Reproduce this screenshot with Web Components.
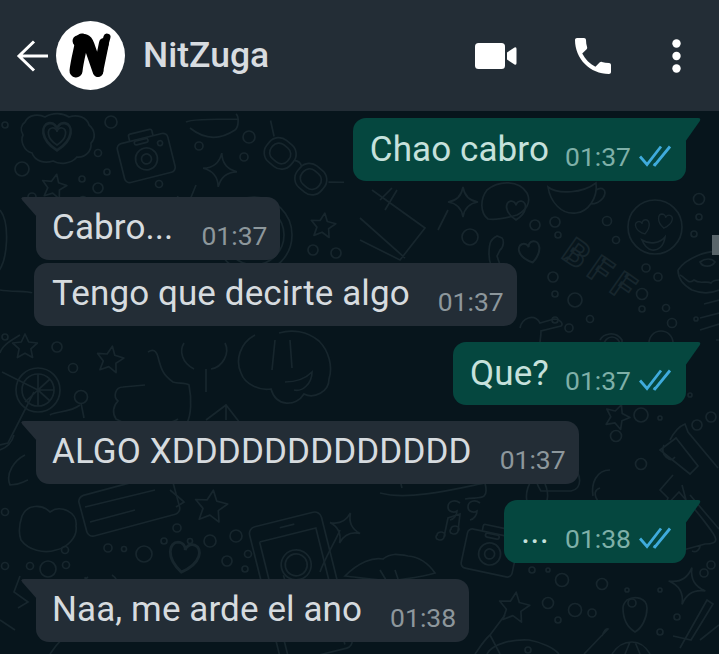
<!DOCTYPE html>
<html lang="es">
<head>
<meta charset="utf-8">
<title>NitZuga</title>
<style>
  html, body { margin: 0; height: 100%; background: #07151c; overflow: hidden; }
  body { font-family: Roboto, "Liberation Sans", sans-serif; }
</style>
</head>
<body>
<chat-screen>
  <chat-header slot="header" name="NitZuga"></chat-header>
  <chat-bubble type="out" time="01:37" tail>Chao cabro</chat-bubble>
  <chat-bubble type="in" time="01:37" tail gap>Cabro...</chat-bubble>
  <chat-bubble type="in" time="01:37">Tengo que decirte algo</chat-bubble>
  <chat-bubble type="out" time="01:37" tail gap>Que?</chat-bubble>
  <chat-bubble type="in" time="01:37" tail gap>ALGO XDDDDDDDDDDDDD</chat-bubble>
  <chat-bubble type="out" time="01:38" tail gap>...</chat-bubble>
  <chat-bubble type="in" time="01:38" tail gap>Naa, me arde el ano</chat-bubble>
</chat-screen>

<script>
class ChatHeader extends HTMLElement {
  constructor() {
    super();
    this.attachShadow({ mode: 'open' });
  }

  connectedCallback() {
    this.shadowRoot.innerHTML = `
      <style>
        :host {
          display: flex;
          align-items: center;
          height: 111px;
          background: #232d36;
          flex: none;
          position: relative;
          z-index: 1;
        }
        svg { display: block; flex: none; }
        .back { margin-left: 15px; }
        .avatar { margin-left: 6px; }
        .name {
          margin-left: 18px;
          font-size: 35.500px;
          font-weight: 500;
          color: #d8dce0;
          padding-bottom: 1px;
        }
        .video { margin-left: auto; }
        .call { margin-left: 52px; }
        .more { margin-left: 55px; margin-right: 38px; }
      </style>
      <svg class="back" width="35" height="34" viewBox="0 0 35 34" fill="none" stroke="#fff" stroke-width="3">
        <path d="M33 17H4M19 2.500 4 17l15 14.500"/>
      </svg>
      <svg class="avatar" width="69" height="69" viewBox="0 0 69 69">
        <circle cx="34.500" cy="34.500" r="34.500" fill="#fff"/>
        <g fill="none" stroke="#000" stroke-linecap="round" stroke-linejoin="round">
          <path stroke-width="13" d="M26 19C24 30 21 40 20 50"/>
          <path stroke-width="11" d="M22 20c6-3 9-2 11 4l9 26"/>
          <path stroke-width="10" d="M48 22 42 51"/>
          <path stroke-width="7" d="M51 16 46 34"/>
        </g>
      </svg>
      <span class="name">${this.getAttribute('name')}</span>
      <svg class="video" width="42" height="26" viewBox="0 0 42 26" fill="#fff">
        <rect x="0" y="0" width="30" height="26" rx="3.500"/>
        <path d="M32 9.500 39.500 4.500q2-1 2 1.500v14q0 2.500-2 1.500L32 16.500z"/>
      </svg>
      <svg class="call" width="48" height="48" viewBox="0 0 24 24" fill="#fff">
        <path d="M6.620 10.790c1.440 2.830 3.760 5.140 6.590 6.590l2.200-2.200c.27-.27.67-.36 1.020-.24 1.120.37 2.330.57 3.570.57.55 0 1 .45 1 1V20c0 .55-.45 1-1 1-9.390 0-17-7.610-17-17 0-.55.45-1 1-1h3.500c.55 0 1 .45 1 1 0 1.250.2 2.450.57 3.570.11.35.03.74-.25 1.020l-2.200 2.200z"/>
      </svg>
      <svg class="more" width="9" height="34" viewBox="0 0 9 34" fill="#fff">
        <circle cx="4.500" cy="4.500" r="4.200"/>
        <circle cx="4.500" cy="17" r="4.200"/>
        <circle cx="4.500" cy="29.500" r="4.200"/>
      </svg>
    `;
  }
}

class ChatBubble extends HTMLElement {
  constructor() {
    super();
    this.attachShadow({ mode: 'open' });
  }

  connectedCallback() {
    const out = this.getAttribute('type') === 'out';
    const tailIn = '<svg class="tail" width="16" height="20" viewBox="0 0 16 20"><path d="M16 0H3Q-1 0 1.500 3.500L16 20z"/></svg>';
    const tailOut = '<svg class="tail" width="16" height="26" viewBox="0 0 16 26"><path d="M0 0H13Q16.500 0 14.500 3.500L0 24z"/></svg>';
    const ticks = `
      <svg class="ticks" width="33" height="22" viewBox="0 0 33 22" fill="none" stroke="#3fabdc" stroke-width="2.800">
        <path d="M1 11.500 8 19.500 22 1.500"/>
        <path d="M14.500 19 16 20 31 1.500"/>
      </svg>`;
    this.shadowRoot.innerHTML = `
      <style>
        :host {
          display: flex;
          flex: none;
          position: relative;
          box-sizing: border-box;
          height: 63px;
          align-self: flex-start;
          margin-left: 34px;
          margin-top: 3px;
          padding: 0 13px 0 18px;
          border-radius: 13px;
          background: #232d36;
          color: #d6dbdf;
          font-size: 35px;
          letter-spacing: .1px;
          line-height: 63px;
        }
        :host([tail]) {
          margin-left: 36px;
          padding-left: 16px;
          border-top-left-radius: 0;
        }
        :host([gap]) { margin-top: 16px; }
        :host([type="out"]) {
          align-self: flex-end;
          margin-left: 0;
          margin-right: 33px;
          padding: 0 14px 0 17px;
          background: #05473f;
          color: #c6e1dc;
          border-radius: 13px;
          border-top-right-radius: 0;
        }
        .text { white-space: pre; margin-top: -1px; }
        :host([type="out"]) .text { margin-top: 0; }
        .meta {
          display: flex;
          align-items: center;
          margin-left: 28px;
          font-size: 26.500px;
          letter-spacing: 0;
          line-height: 30px;
          height: 30px;
          margin-top: 24px;
          color: #8d979c;
        }
        :host([type="out"]) .meta { color: #7fb0a8; margin-left: 16px; }
        .ticks { margin-left: 8px; margin-top: -3px; }
        .tail { position: absolute; top: 0; fill: #232d36; }
        :host([type="in"]) .tail { left: -15px; }
        :host([type="out"]) .tail { right: -15px; fill: #05473f; }
      </style>
      ${this.hasAttribute('tail') ? (out ? tailOut : tailIn) : ''}
      <span class="text"><slot></slot></span>
      <span class="meta">${this.getAttribute('time')}${out ? ticks : ''}</span>
    `;
  }
}

// piezas del fondo, coordenadas sobre la captura
const star5 = (x, y, r, rot = 0) => {
  let d = '';
  for (let i = 0; i < 10; i++) {
    const rad = (i % 2 ? r * 0.48 : r);
    const a = (i * 36 - 90 + rot) * Math.PI / 180;
    d += (i ? 'L' : 'M') + (x + rad * Math.cos(a)).toFixed(1) + ' ' + (y + rad * Math.sin(a)).toFixed(1);
  }
  return `<path stroke-linejoin="round" d="${d}z"/>`;
};
const star4 = (x, y, r, rot = 0) =>
  `<path transform="rotate(${rot} ${x} ${y})" d="M${x} ${y - r}Q${x + 2} ${y - 2} ${x + r} ${y}Q${x + 2} ${y + 2} ${x} ${y + r}Q${x - 2} ${y + 2} ${x - r} ${y}Q${x - 2} ${y - 2} ${x} ${y - r}z"/>`;
const heart = (x, y, s, rot = 0) =>
  `<path transform="translate(${x} ${y}) rotate(${rot}) scale(${s})" d="M0 9C-11 2-10-7-5-8-2-8.500 0-6 0-4 0-6 2-8.500 5-8 10-7 11 2 0 9z"/>`;
const dots = (list) => list.map(([x, y, r]) => `<circle cx="${x}" cy="${y}" r="${r}"/>`).join('');
const camera = (x, y, rot, s = 1) => `
  <g transform="translate(${x} ${y}) rotate(${rot}) scale(${s})">
    <rect x="-26" y="-19" width="52" height="40" rx="5"/>
    <path d="M-12-19v-5q0-2 2-2h20q2 0 2 2v5"/>
    <rect x="-8" y="-18" width="14" height="4" rx="2"/>
    <circle cx="0" cy="2" r="11"/><circle cx="0" cy="2" r="5"/><circle cx="17" cy="-10" r="2.500"/>
  </g>`;

class ChatWallpaper extends HTMLElement {
  constructor() {
    super();
    this.attachShadow({ mode: 'open' });
  }

  connectedCallback() {
    this.shadowRoot.innerHTML = `
      <style>
        :host { position: absolute; top: -111px; left: 0; display: block; }
        svg { display: block; }
        text { font: 700 36px Roboto, sans-serif; letter-spacing: 8px; }
      </style>
      <svg width="719" height="654" viewBox="0 0 719 654" fill="none" stroke="#17262d" stroke-width="1.700">
        <!-- arriba izquierda -->
        <path d="M25 122c4-8 14-8 20-5 8-5 18-4 24 0 8-3 18 0 20 8 6 5 7 13 2 18 1 8-6 15-14 14-6 7-17 8-24 4-9 3-18 0-21-8-8-2-12-12-9-18-3-5-2-10 2-13z"/>
        ${heart(57, 136, 1.600)}${heart(57, 136, 1)}
        ${camera(146, 157, -14)}
        <g transform="translate(296 168) rotate(40)">
          <rect x="-37" y="-15" width="31" height="28" rx="12"/><rect x="3" y="-15" width="31" height="28" rx="12"/>
          <rect x="-32" y="-10" width="21" height="18" rx="8"/><rect x="8" y="-10" width="21" height="18" rx="8"/>
          <path d="M-6-5q5-3 9 0M-37-10-50-20M34-10l12-10"/>
        </g>
        <path d="M190 128c15 12 30 12 45 2 4-3 4-14 1-16M186 122c5-3 50-3 52-3"/>
        ${star4(220, 170, 17, 6)}${star5(54, 187, 13, 12)}${star5(323, 226, 13, 8)}
        ${dots([[22, 169, 7], [5, 125, 3], [111, 122, 6], [83, 201, 4.500], [98, 153, 3.500], [107, 172, 3], [82, 179, 3], [98, 188, 5], [199, 146, 4], [249, 137, 6], [244, 157, 4], [159, 184, 3.500], [313, 250, 5], [336, 253, 5], [32, 197, 4]])}
        <path d="M178 196 172 210M196 185 185 212"/>
        <circle cx="254" cy="235" r="38"/><circle cx="254" cy="235" r="30"/>
        <path d="M0 210c10 12 8 50-2 62M0 290c10 2 30 1 32 3M20 335c-8 5-18 10-20 18"/>
        <!-- centro arriba -->
        <path d="M372 190 425 228 400 260 360 240M360 218l45 40M380 200l12-12M397 190l-12 20M448 210l-10 20"/>
        ${star4(463, 202, 15)}
        <circle cx="470" cy="237" r="8"/>
        <path d="M487 190c12-10 32-10 40 3 5 10-2 18-10 22-10 3-22 5-29 4-8-6-8-20-1-29z"/>
        ${heart(516, 210, 1.100, 0)}
        <path d="M548 187c10 8 35 6 48-4 2 15-8 29-20 30-15 2-26-12-28-26zM596 190c6-4 12 0 7 8-4 5-9 6-12 6"/>
        ${dots([[535, 225, 5], [555, 222, 5], [558, 235, 3], [607, 221, 4.500], [616, 240, 3.500], [699, 199, 5.500], [699, 217, 3], [694, 234, 3], [646, 268, 4], [658, 277, 4], [553, 277, 5], [555, 294, 3], [575, 300, 7], [590, 319, 3.500], [555, 320, 3], [642, 294, 5.500], [642, 309, 3], [666, 308, 3.500], [672, 323, 4.500], [569, 328, 4], [696, 319, 2]])}
        <circle cx="655" cy="227" r="27"/>
        ${heart(643, 227, .8, -15)}${heart(665, 221, .8, 10)}
        <path d="M642 240c8 5 18 3 23-3-1 9-7 14-13 13-5-1-8-5-10-10z"/>
        <path d="M497 236c-6 3-8 6-8 18 0 8 3 18 8 16l3-5-3-9 3-6c4-3 4-10 2-12l-5-2z"/>
        ${heart(530, 252, 1.200, -15)}
        <text x="560" y="257" transform="rotate(35 560 257)">BFF</text>
        <path d="M678 270c8-12 30-20 40-18M678 270c0 8 5 15 14 20 10 4 20 3 27 0M680 275c6 3 8 10 14 5 6 5 12 0 17 3 2-3 6-3 8-3M700 262c5-4 12-4 15 0-3 5-12 6-15 0z"/>
        <path d="M700 318l19-5M700 330l19-6M704 304l15-4"/>
        <path d="M520 328c2-10 14-15 20-5l14-4c6 0 10 5 7 7l-20 5c0 6-1 8-1 12M600 340c3-6 15-10 22 0l0 4M716 340h4"/>
        <!-- centro -->
        <path d="M255 335c-15 8-20 25-14 38 4 12 20 18 30 16 5 18 25 18 33 5 10 5 25-2 25-15 4-12 0-28-10-38-12-10-27-12-40-8M275 340l-3 30M290 340l2 28M285 382c10 0 20-3 27-10 0 12-10 20-18 18"/>
        <path d="M184 343c-5 8-2 20 10 26M225 343c5 10-2 24-14 26M206 369v23"/>
        <path d="M148 352c5-3 8-2 10 5 3 12 5 18 15 25 5 2 12 0 16 3 3 15 2 30-2 38M145 385l-22 2c-8 0-10 10-5 14-5 5-6 12-2 18l8 4M160 425c8-2 14-3 18-6"/>
        ${star5(110, 360, 14, 10)}${star5(25, 347, 13)}
        ${dots([[57, 347, 5], [73, 368, 4.500], [81, 397, 6.500], [5, 337, 3]])}
        <circle cx="38" cy="390" r="22"/><circle cx="38" cy="390" r="16"/>
        <path d="M38 390V374M38 390l12-11M38 390h16M38 390l12 11M38 390v16M38 390l-13 12M38 390 2 372M34 392 8 443 0 445"/>
        <path d="M81 403l3 15M206 420l20-15 14 18M226 405v15"/>
        <path d="M80 405c-10 8-25 6-30 10"/>
        <!-- derecha del centro -->
        ${star5(617, 417, 13, 20)}
        ${dots([[641, 415, 7], [600, 375, 6], [632, 390, 4.500], [616, 436, 5.500], [641, 464, 5.500], [660, 418, 2], [711, 417, 5], [697, 425, 5], [690, 395, 2]])}
        <path d="M670 440c4-8 10-14 15-16l3 8 30 36M660 450l16-12 22 28-8 8zM664 445c-2 4-2 8 2 12 4 3 6 4 9 0"/>
        <path d="M673 475 660 490l8 8-4 10 15-16 7 8-4-15M690 495l29 34"/>
        <path d="M565 445c-5 3-14 15-12 18-3 3-10 2-12 0-8 2-7 18 0 28l30 0c12-2 11-18 0-25-2-4-2-10-3-14l-2-7z"/>
        <path d="M528 505c-4-10 0-25 10-30 8 5 12 20 8 28M610 470c-14 0-19 14-17 26"/>
        <circle cx="612" cy="345" r="8"/><circle cx="661" cy="343" r="12"/>
        <!-- abajo izquierda -->
        <rect x="-28" y="-21" width="96" height="42" rx="6" transform="translate(110 510) rotate(-15)"/>
        <path d="M85 507 155 490M90 522 135 510"/>
        <path d="M170 490c6 5 12 10 14 12l-8 5"/>
        ${star5(211, 507, 17, 8)}
        <path d="M22 516c5-12 20-12 28-4 10-8 28 0 26 14 2 12-10 22-20 24-12 4-28 0-35-10-3-8-1-18 1-24z"/>
        ${dots([[5, 512, 3.500], [65, 550, 3.500], [177, 528, 4], [190, 541, 2.500], [164, 541, 3], [210, 541, 6], [236, 536, 6], [248, 554, 3.500], [108, 548, 4], [124, 549, 2.500], [66, 565, 3.500], [30, 566, 3.500], [5, 566, 3.500], [144, 554, 8], [227, 561, 5], [245, 569, 3], [48, 569, 8]])}
        ${heart(184, 557, 1.700, 10)}
        <path d="M0 450c8-3 12-8 14-15M25 455c-10 5-20 18-15 30 10 0 12-3 18-5"/>
        <g transform="translate(295 560) rotate(-14)">
          <rect x="-38" y="-42" width="74" height="140" rx="7"/>
          <path d="M-30-26h58v120M-30-26V94M-7-35H8"/>
          <circle cx="0" cy="5" r="15"/><circle cx="0" cy="5" r="11"/>
          <path d="M-15 12-14 26-4 20"/>
        </g>
        ${star4(345, 528, 16, 20)}
        <path d="M62 605c8-10 15-20 26-28M85 577c3 15 3 22 0 27M112 575c6 4 8 10 5 22M20 576l-6 16 14 10-10 6M0 620l15 10M50 654c8-12 16-20 25-25"/>
        <!-- abajo derecha -->
        <path d="M340 530c-4 10-15 28-20 42M345 576c14-14 28-19 38-17 8-6 14-5 25-3 12 1 20 7 27 17-15 5-35 6-42 8-15-1-30-3-48-5zM380 570l6 10M395 570l4 12M420 610c-2-8-2-14-3-18-1-5 0-5-5-5"/>
        ${camera(490, 552, 12)}
        <path d="M460 503c-5-4-12-2-12 4 0 5 6 6 9 4 0 4-3 8-7 9M480 503c-5-4-12-2-12 4 0 5 6 6 9 4 0 4-3 8-7 9"/>
        <path d="M444 537 448 518 460 514 458 531M444 537a4 3 0 1 1-7-2 4 3 0 1 1 7 2zM458 531a4 3 0 1 1-7-2 4 3 0 1 1 7 2z"/>
        <path d="M380 493c30 8 80-5 105-10 5 20-8 13-20 16M400 480l2 8M600 488c-10 3-2 15 3 20M690 505c5 3 25 30 25 32 3 6-4 7-10 7l-22 6M700 545c0 5-4 8-8 6"/>
        ${star5(514, 608, 16, 8)}
        ${dots([[532, 570, 3], [548, 570, 2], [562, 580, 6.500], [602, 584, 5.500], [660, 590, 2], [630, 543, 2], [548, 603, 5.500], [575, 610, 6.500], [592, 613, 4], [558, 620, 3], [677, 617, 3], [660, 632, 3], [704, 573, 4], [711, 565, 4], [627, 590, 2]])}
        ${star4(687, 586, 19, 15)}
        <path d="M627 600c8-5 20-2 20 8 0 10-5 20-12 24-8-5-12-14-12-24 0-4 2-6 4-8z"/><circle cx="632" cy="603" r="4"/>
        <path d="M680 648 707 600l6 4-22 36-18-4M719 625 700 640"/>
        <path d="M487 654c5-10 25-15 42-14 12 2 25 8 30 14M602 636c2-5 4-8 6-7l-24 25M612 654c5-8 12-12 20-12 8 0 14 5 18 12M625 654l5-12M640 654l-5-12"/>
        <path d="M505 615 490 635l10 19M490 635c-6 5-12 15-15 19"/>
        <circle cx="528" cy="650" r="3"/>
      </svg>
    `;
  }
}

class ChatScreen extends HTMLElement {
  constructor() {
    super();
    this.attachShadow({ mode: 'open' });
  }

  connectedCallback() {
    this.shadowRoot.innerHTML = `
      <style>
        :host {
          display: flex;
          flex-direction: column;
          width: 719px;
          height: 654px;
          overflow: hidden;
          background: #07151c;
        }
        .messages {
          flex: 1;
          position: relative;
          overflow: hidden;
        }
        .list {
          position: relative;
          display: flex;
          flex-direction: column;
          padding-top: 4px;
        }
        .thumb {
          position: absolute;
          top: 124px;
          right: 0;
          width: 7px;
          height: 20px;
          background: #59656a;
        }
      </style>
      <slot name="header"></slot>
      <div class="messages">
        <chat-wallpaper></chat-wallpaper>
        <div class="list"><slot></slot></div>
        <div class="thumb"></div>
      </div>
    `;
  }
}

customElements.define('chat-wallpaper', ChatWallpaper);
customElements.define('chat-header', ChatHeader);
customElements.define('chat-bubble', ChatBubble);
customElements.define('chat-screen', ChatScreen);
</script>
</body>
</html>
